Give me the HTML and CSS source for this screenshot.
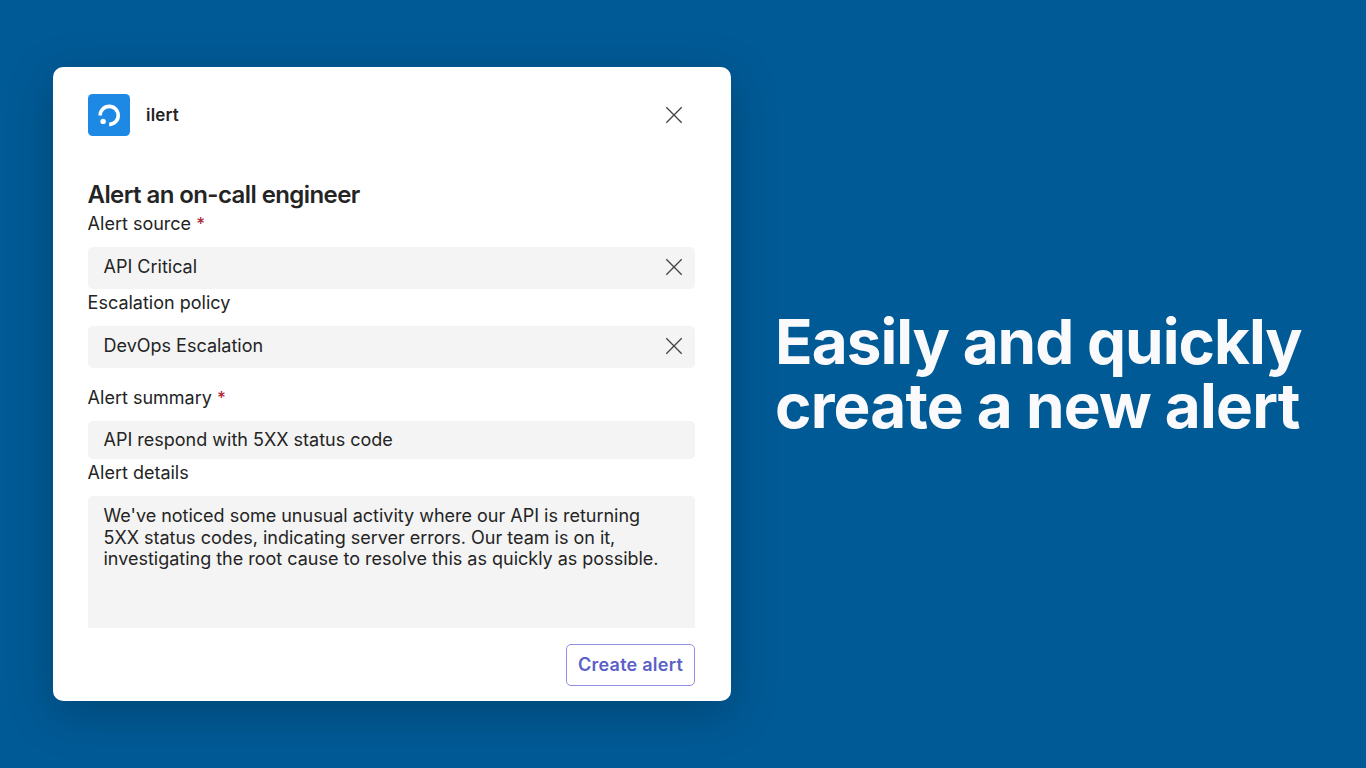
FILE: index.html
```
<!DOCTYPE html>
<html lang="en">
<head>
    <meta charset="UTF-8">
    <meta name="viewport" content="width=device-width, initial-scale=1.0">
    <title>ilert - Create alert</title>
    <link rel="stylesheet" href="styles.css">
</head>
<body>
    <div class="card">
        <div class="card-header">
            <svg class="logo" viewBox="0 0 42 42">
                <rect width="42" height="42" rx="4.5" fill="#1e88e5"/>
                <path d="M12.2 21.4A9 9 0 1 1 21.2 30.4" fill="none" stroke="#fff" stroke-width="3.6"/>
                <circle cx="15.1" cy="27.4" r="2.7" fill="#fff"/>
            </svg>
            <span class="app-name">ilert</span>
            <svg class="close" viewBox="0 0 18 18"><path d="M1.3 1.3l15.4 15.4M16.7 1.3L1.3 16.7"/></svg>
        </div>

        <h2>Alert an on-call engineer</h2>

        <div class="label">Alert source <span class="required">*</span></div>
        <div class="field">
            <span>API Critical</span>
            <svg class="close" viewBox="0 0 18 18"><path d="M1.3 1.3l15.4 15.4M16.7 1.3L1.3 16.7"/></svg>
        </div>

        <div class="label">Escalation policy</div>
        <div class="field">
            <span>DevOps Escalation</span>
            <svg class="close" viewBox="0 0 18 18"><path d="M1.3 1.3l15.4 15.4M16.7 1.3L1.3 16.7"/></svg>
        </div>

        <div class="label summary-label">Alert summary <span class="required">*</span></div>
        <div class="field summary">API respond with 5XX status code</div>

        <div class="label">Alert details</div>
        <div class="details">We've noticed some unusual activity where our API is returning<br>5XX status codes, indicating server errors. Our team is on it,<br>investigating the root cause to resolve this as quickly as possible.</div>

        <button>Create alert</button>
    </div>

    <h1>Easily and quickly<br><span class="second-line">create a new alert</span></h1>
</body>
</html>
```

FILE: styles.css
```
* {
    box-sizing: border-box;
}
body {
    margin: 0;
    height: 768px;
    padding: 67px 0 0 53px;
    display: flex;
    align-items: flex-start;
    overflow: hidden;
    background-color: #005a96;
    font-family: Inter, "Liberation Sans", sans-serif;
    color: #242424;
}
.card {
    display: flex;
    flex-direction: column;
    flex-shrink: 0;
    width: 678px;
    height: 634px;
    padding: 27px 36px 15px 35px;
    background-color: #fff;
    border-radius: 10px;
    box-shadow: 0 12px 48px rgba(0, 0, 0, 0.22);
}
.card-header {
    display: flex;
    align-items: center;
    height: 42px;
    padding-right: 12px;
}
.logo {
    width: 42px;
    height: 42px;
}
.app-name {
    margin-left: 16px;
    font-size: 17px;
    font-weight: 600;
    letter-spacing: 0.2px;
}
.close {
    width: 18px;
    height: 18px;
    margin-left: auto;
    fill: none;
    stroke: #424242;
    stroke-width: 1.3;
}
h2 {
    margin: 44px 0 0 -0.5px;
    font-size: 24px;
    line-height: 30px;
    font-weight: 600;
    letter-spacing: -0.58px;
}
.label {
    height: 26px;
    margin-bottom: 11px;
    margin-left: -0.4px;
    padding-top: 1px;
    font-size: 18px;
    line-height: 26px;
}
.required {
    color: #b02a3c;
    font-weight: 500;
    font-size: 17px;
}
.field {
    display: flex;
    align-items: center;
    height: 42px;
    padding: 0 12px 3px 15.5px;
    background-color: #f4f4f4;
    border-radius: 5px;
    font-size: 18px;
}
.summary-label {
    margin-top: 16px;
}
.summary {
    height: 38px;
    padding-bottom: 2px;
}
.details {
    height: 132px;
    padding: 9px 0 0 15.5px;
    background-color: #f4f4f4;
    border-radius: 5px 5px 0 0;
    font-size: 18px;
    line-height: 21.5px;
    letter-spacing: -0.01px;
    white-space: nowrap;
}
button {
    align-self: flex-end;
    width: 129px;
    height: 42px;
    margin-top: 16px;
    padding: 0 0 1px;
    background-color: #fff;
    border: 1px solid #8f90e6;
    border-radius: 5px;
    color: #5b5fc7;
    font-family: inherit;
    font-size: 18px;
    font-weight: 600;
    letter-spacing: 0.25px;
}
h1 {
    margin: 243px 0 0 44px;
    font-size: 62px;
    line-height: 64px;
    font-weight: 700;
    letter-spacing: -1px;
    color: #fafafc;
    white-space: nowrap;
}
.second-line {
    letter-spacing: -0.8px;
}
```
